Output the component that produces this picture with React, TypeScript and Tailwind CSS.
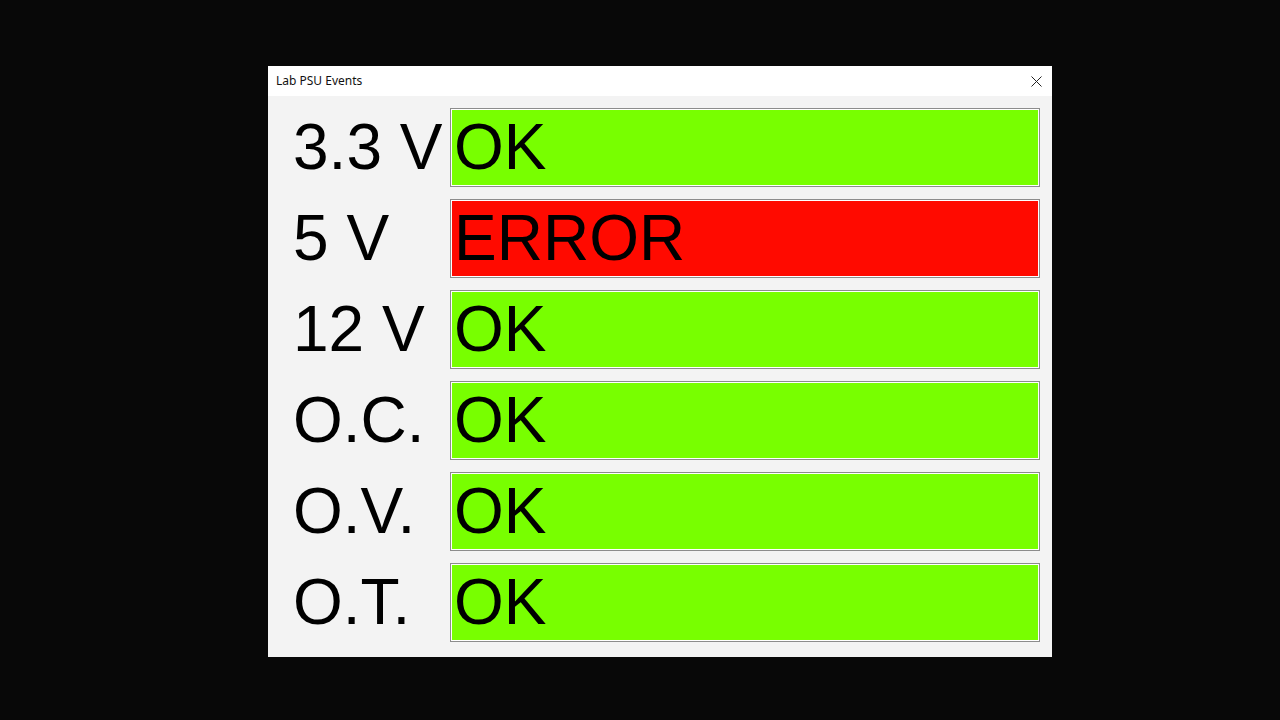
const rows = [
  { label: "3.3 V", status: "OK" },
  { label: "5 V", status: "ERROR" },
  { label: "12 V", status: "OK" },
  { label: "O.C.", status: "OK" },
  { label: "O.V.", status: "OK" },
  { label: "O.T.", status: "OK" },
];

export default function App() {
  return (
    <div className="w-[1280px] h-[720px] bg-[#080808] flex items-start pt-[66px] pl-[268px]">
      <div className="w-[784px] h-[591px] bg-[#f3f3f3] flex flex-col">
        {/* Title bar */}
        <div className="h-[30px] bg-white flex items-center justify-between pl-[8px] pr-[10px]">
          <span className="text-[12px] text-[#111] font-['Noto_Sans','Liberation_Sans',sans-serif]">
            Lab PSU Events
          </span>
          <svg width="11" height="11" viewBox="0 0 11 11">
            <path d="M0.5 0.5 L10.5 10.5 M10.5 0.5 L0.5 10.5" stroke="#222" strokeWidth="1" />
          </svg>
        </div>

        {/* Status rows */}
        <div className="flex flex-col gap-[12px] pt-[12px] pb-[15px] pl-[25px] pr-[12px]">
          {rows.map((r) => (
            <div key={r.label} className="flex h-[79px] items-center">
              <div className="w-[157px] text-[64px] leading-none text-black font-['Liberation_Sans',Arial,sans-serif] -translate-y-px">
                {r.label}
              </div>
              <div className="flex-1 h-full border border-[#8c8c8c] p-px bg-white">
                <div
                  className={
                    r.status === "OK"
                      ? "h-full bg-[#78ff00] flex items-center pl-[2px]"
                      : "h-full bg-[#ff0a00] flex items-center pl-[2px]"
                  }
                >
                  <span className="text-[64px] leading-none text-black font-['Liberation_Sans',Arial,sans-serif] -translate-y-px">
                    {r.status}
                  </span>
                </div>
              </div>
            </div>
          ))}
        </div>
      </div>
    </div>
  );
}
